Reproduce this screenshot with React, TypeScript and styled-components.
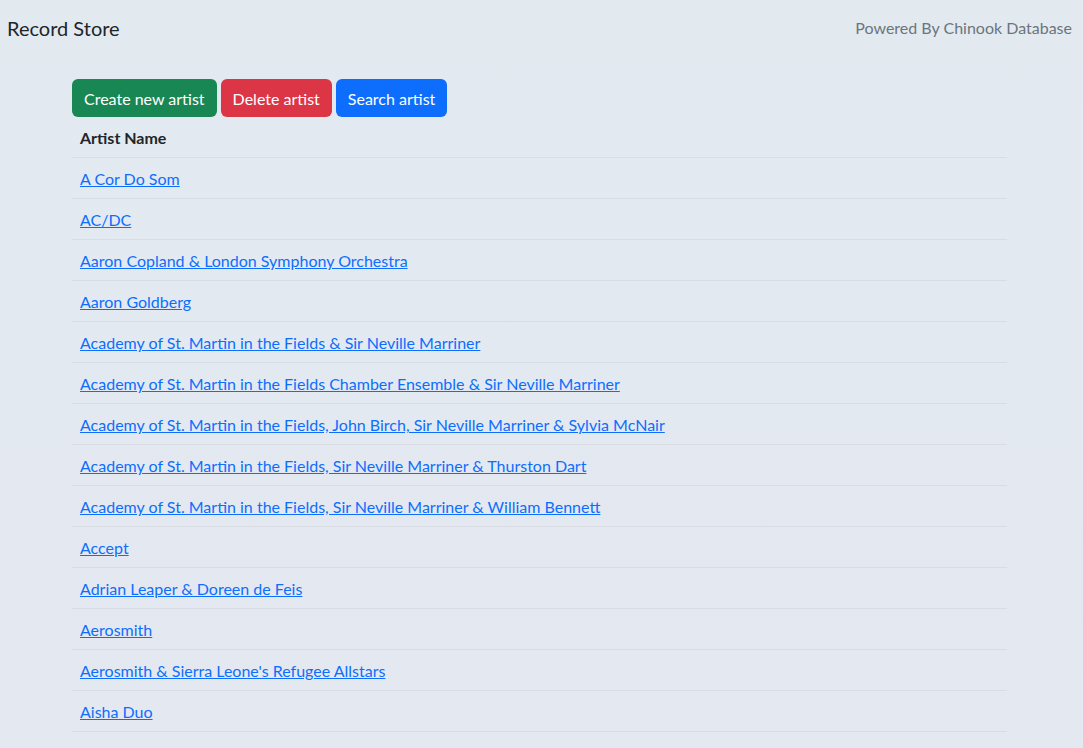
import React from "react";
import styled, { createGlobalStyle } from "styled-components";

const GlobalStyle = createGlobalStyle`
  html, body {
    margin: 0;
    padding: 0;
  }
  body {
    min-height: 748px;
    background: linear-gradient(180deg, #e2eaf0 0%, #e4e8f0 100%);
    font-family: "Lato", "Segoe UI", "Noto Sans", sans-serif;
    font-size: 16px;
    line-height: 1.5;
    color: #212529;
  }
`;

const Nav = styled.nav`
  display: flex;
  align-items: center;
  justify-content: space-between;
  height: 57px;
  padding: 0 11px 0 7px;
`;

const Brand = styled.span`
  font-size: 20px;
  line-height: 30px;
  padding-bottom: 2px;
  color: #212529;
`;

const Powered = styled.span`
  font-size: 16px;
  padding-bottom: 2px;
  color: #6c757d;
`;

const Container = styled.main`
  width: 935px;
  margin: 22px 0 0 72px;
`;

const Toolbar = styled.div`
  display: flex;
  gap: 4px;
`;

const Button = styled.button<{ $variant: "success" | "danger" | "primary" }>`
  font-family: inherit;
  font-size: 16px;
  line-height: 24px;
  padding: 7px 11px 5px;
  height: 38px;
  border: 1px solid transparent;
  border-radius: 6px;
  color: #fff;
  cursor: pointer;
  background: ${(p) =>
    p.$variant === "success" ? "#198754" : p.$variant === "danger" ? "#dc3545" : "#0d6efd"};
`;

const Table = styled.table`
  width: 100%;
  border-collapse: collapse;
`;

const Th = styled.th`
  text-align: left;
  font-weight: 700;
  padding: 9px 8px 7px;
  line-height: 24px;
  border-bottom: 1px solid #d9dde3;
`;

const Td = styled.td`
  padding: 9px 8px 7px;
  line-height: 24px;
  border-bottom: 1px solid #d9dde3;
`;

const ArtistLink = styled.a`
  color: #0d6efd;
  text-decoration: underline;
`;

const artists = [
  "A Cor Do Som",
  "AC/DC",
  "Aaron Copland & London Symphony Orchestra",
  "Aaron Goldberg",
  "Academy of St. Martin in the Fields & Sir Neville Marriner",
  "Academy of St. Martin in the Fields Chamber Ensemble & Sir Neville Marriner",
  "Academy of St. Martin in the Fields, John Birch, Sir Neville Marriner & Sylvia McNair",
  "Academy of St. Martin in the Fields, Sir Neville Marriner & Thurston Dart",
  "Academy of St. Martin in the Fields, Sir Neville Marriner & William Bennett",
  "Accept",
  "Adrian Leaper & Doreen de Feis",
  "Aerosmith",
  "Aerosmith & Sierra Leone's Refugee Allstars",
  "Aisha Duo",
  "Alanis Morissette",
];

export default function App() {
  return (
    <>
      <GlobalStyle />
      <Nav>
        <Brand>Record Store</Brand>
        <Powered>Powered By Chinook Database</Powered>
      </Nav>
      <Container>
        <Toolbar>
          <Button $variant="success">Create new artist</Button>
          <Button $variant="danger">Delete artist</Button>
          <Button $variant="primary">Search artist</Button>
        </Toolbar>
        <Table>
          <thead>
            <tr>
              <Th>Artist Name</Th>
            </tr>
          </thead>
          <tbody>
            {artists.map((a) => (
              <tr key={a}>
                <Td>
                  <ArtistLink href="#">{a}</ArtistLink>
                </Td>
              </tr>
            ))}
          </tbody>
        </Table>
      </Container>
    </>
  );
}
